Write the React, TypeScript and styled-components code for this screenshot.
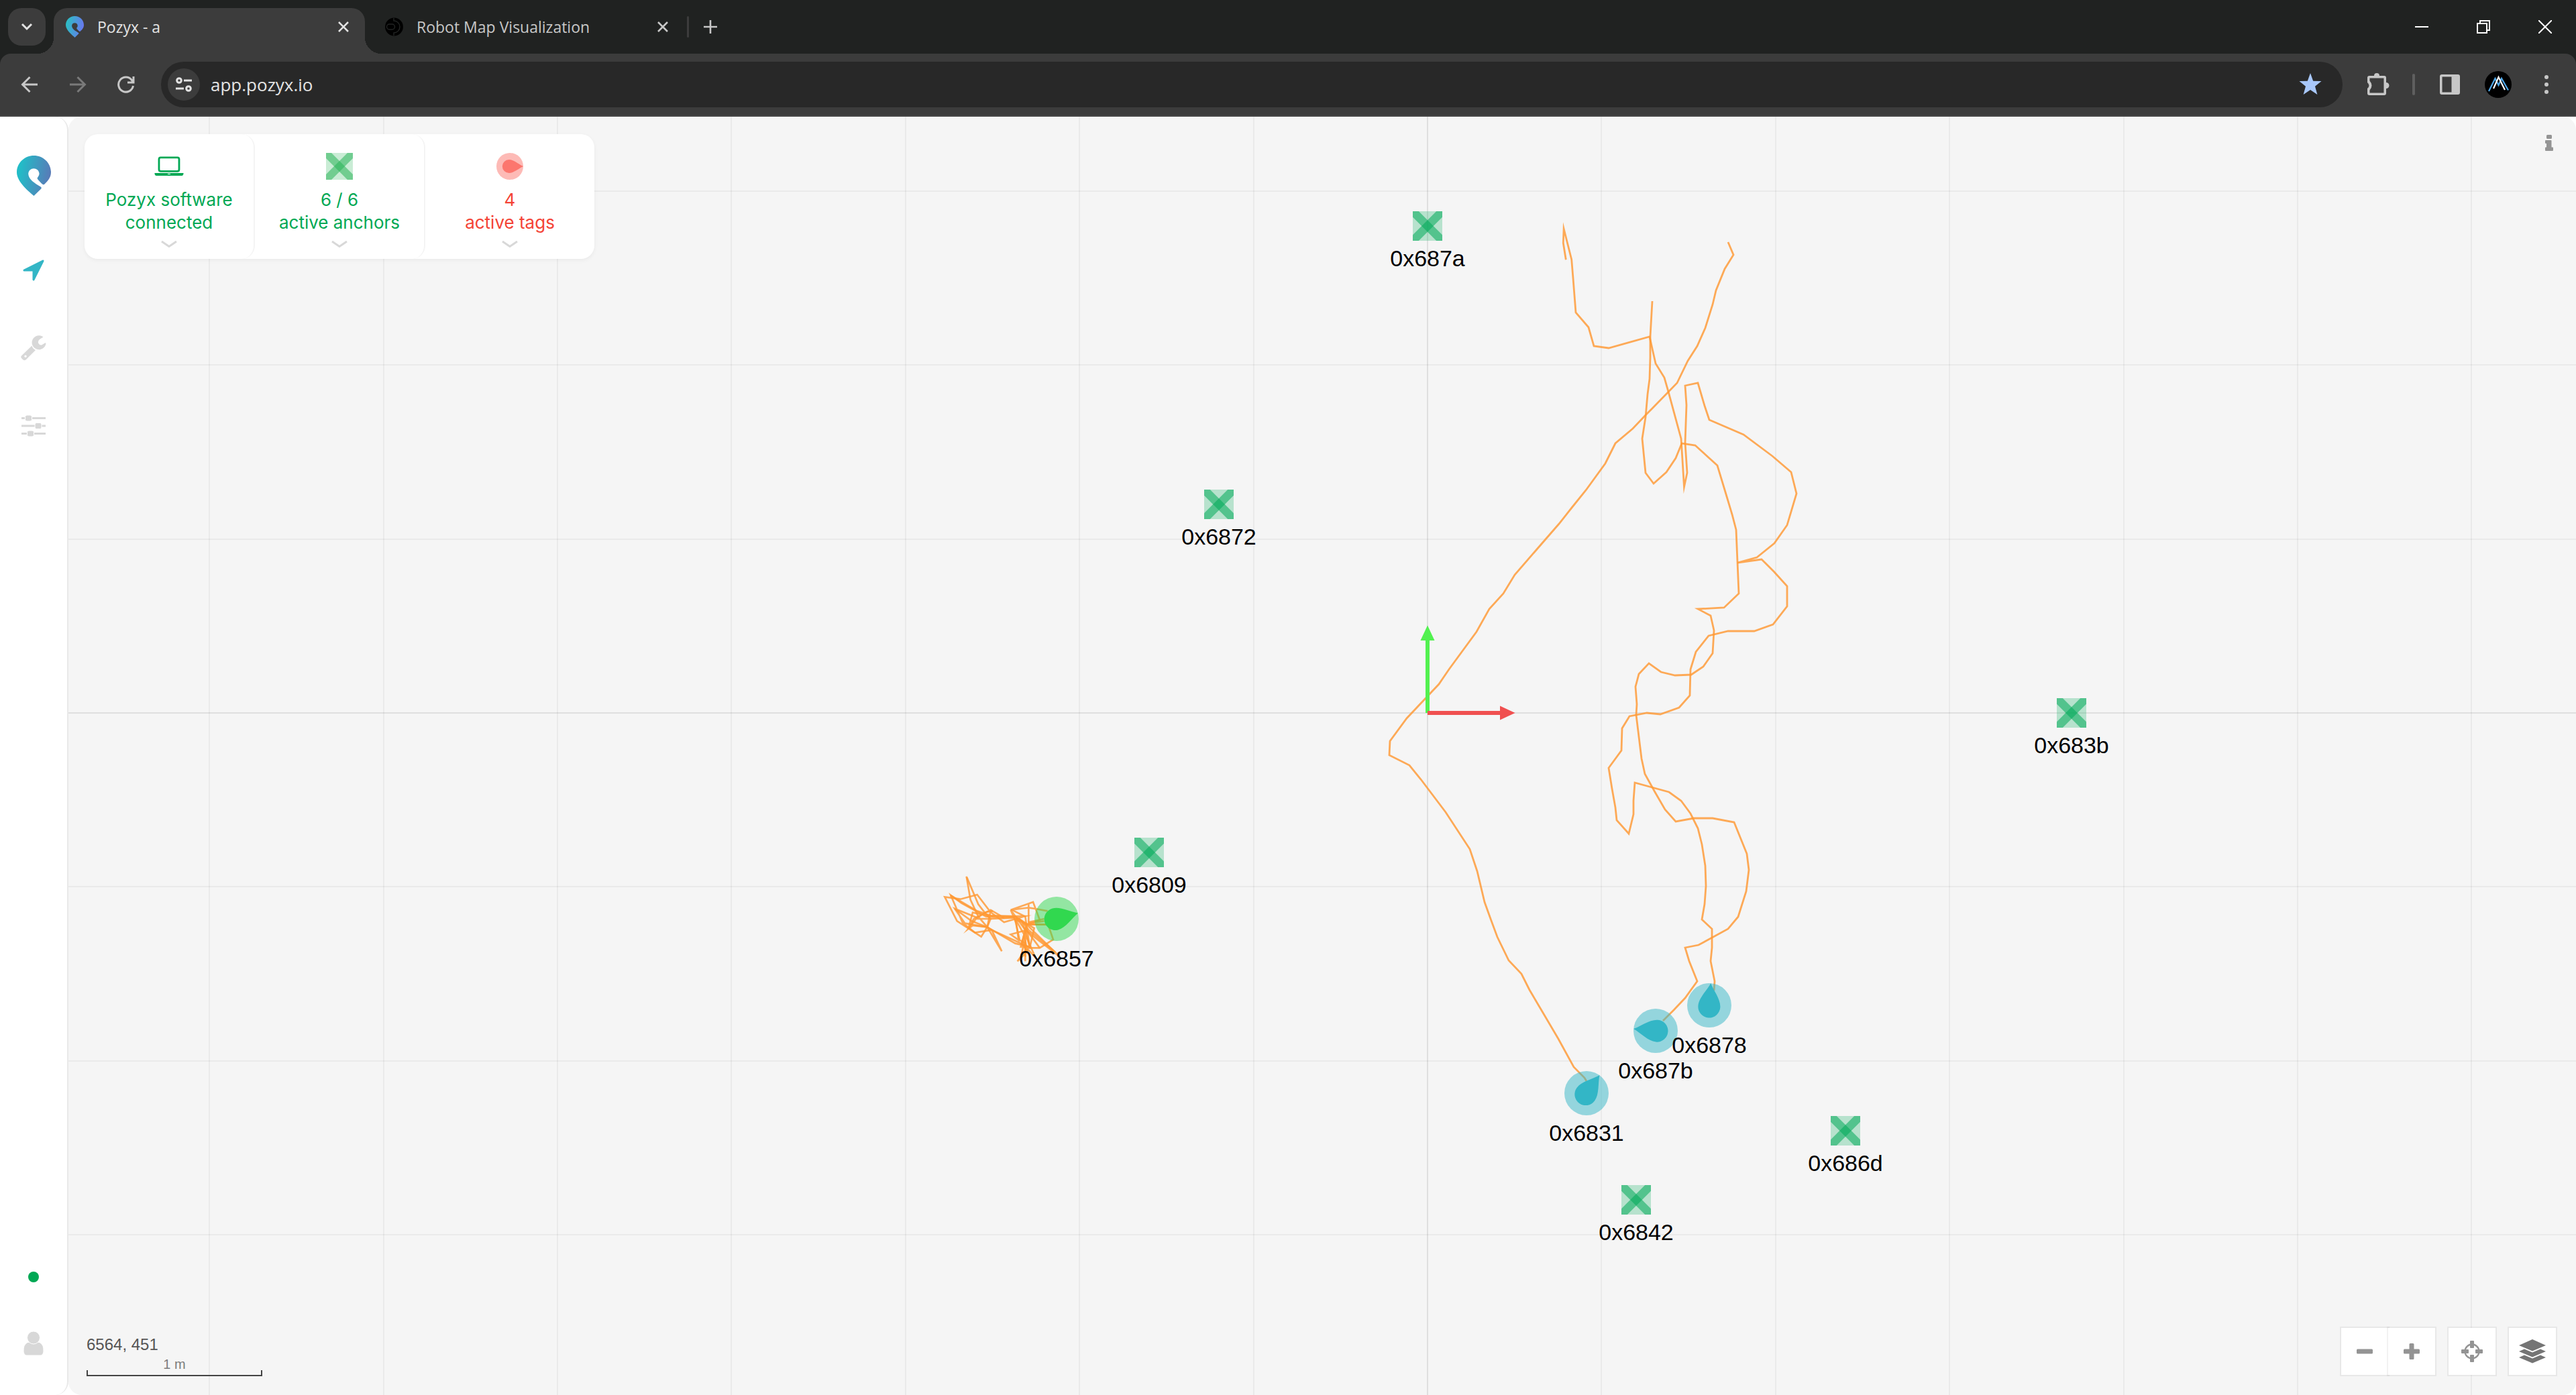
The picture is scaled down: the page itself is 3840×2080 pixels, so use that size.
import React from "react";
import styled, { createGlobalStyle, css } from "styled-components";

/* ---------- theme values ---------- */
const ui = `Inter, "Open Sans", sans-serif`;
const chromeFont = `"Open Sans", "Noto Sans", sans-serif`;
const mapFont = `"Liberation Sans", Arial, sans-serif`;
const green = "#00a854";
const teal = "#33b6c6";

const Global = createGlobalStyle`
  *, *::before, *::after { box-sizing: border-box; }
  html, body { margin: 0; background: #fff; }
  button, input { font: inherit; margin: 0; }
  svg { display: block; }
`;

const Page = styled.div`
  display: flex;
  flex-direction: column;
  min-height: 100vh;
  font-family: ${ui};
`;

const bare = css`
  appearance: none;
  border: 0;
  padding: 0;
  background: none;
  color: inherit;
  display: flex;
  align-items: center;
  justify-content: center;
  cursor: pointer;
`;

/* ---------- browser tabs ---------- */
const TabStrip = styled.header`
  display: flex;
  align-items: center;
  height: 80px;
  padding-left: 12px;
  background: #202221;
  color: #e3e3e3;
  font-family: ${chromeFont};
`;

const TabSearch = styled.button`
  ${bare}
  width: 56px;
  height: 56px;
  border-radius: 20px;
  background: #3c3c3c;
  margin-right: 12px;
`;

const Tab = styled.div<{ $active?: boolean }>`
  position: relative;
  display: flex;
  align-items: center;
  align-self: flex-end;
  width: ${(p) => (p.$active ? 464 : 480)}px;
  height: 68px;
  padding: ${(p) => (p.$active ? "0 18px 12px 18px" : "0 22px 12px 30px")};
  color: ${(p) => (p.$active ? "#e3e3e3" : "#c7c7c7")};
  ${(p) =>
    p.$active &&
    css`
      background: #3c3c3c;
      border-radius: 20px 20px 0 0;
      &::before,
      &::after {
        content: "";
        position: absolute;
        bottom: 0;
        width: 24px;
        height: 24px;
      }
      &::before {
        right: 100%;
        background: radial-gradient(circle at 0 0, transparent 24px, #3c3c3c 24px);
      }
      &::after {
        left: 100%;
        background: radial-gradient(circle at 100% 0, transparent 24px, #3c3c3c 24px);
      }
    `}
`;

const TabTitle = styled.button`
  ${bare}
  flex: 1;
  justify-content: flex-start;
  gap: 20px;
  font-size: 23px;
  line-height: 32px;
  white-space: nowrap;
`;

const SmallButton = styled.button`
  ${bare}
  width: 28px;
  height: 28px;
`;

const TabRule = styled.span`
  width: 3px;
  height: 32px;
  border-radius: 2px;
  background: #3c3c3c;
`;

const NewTab = styled.button`
  ${bare}
  width: 64px;
  height: 56px;
`;

const WindowButtons = styled.div`
  display: flex;
  margin-left: auto;
`;

const WindowButton = styled.button`
  ${bare}
  width: 92px;
  height: 80px;
`;

/* ---------- browser toolbar ---------- */
const ToolbarBack = styled.div`
  background: #202221;
`;

const Toolbar = styled.div`
  display: flex;
  align-items: center;
  height: 94px;
  padding: 0 8px;
  background: #3c3c3c;
  border-bottom: 2px solid #474747;
  border-radius: 16px 16px 0 0;
  color: #c7c7c7;
  font-family: ${chromeFont};
`;

const ToolButton = styled.button<{ $dim?: boolean }>`
  ${bare}
  width: 72px;
  height: 68px;
  color: ${(p) => (p.$dim ? "#7a7a7a" : "#c7c7c7")};
`;

const AddressBar = styled.form`
  display: flex;
  align-items: center;
  flex: 1;
  height: 68px;
  margin: 0 18px 0 16px;
  padding: 0 34px 0 10px;
  border-radius: 34px;
  background: #282828;
`;

const SiteInfo = styled.button`
  ${bare}
  width: 48px;
  height: 48px;
  border-radius: 50%;
  background: #3c3c3c;
  color: #e3e3e3;
`;

const AddressInput = styled.input`
  flex: 1;
  border: 0;
  outline: 0;
  padding: 0 0 0 16px;
  background: none;
  color: #e3e3e3;
  font-size: 26px;
  line-height: 36px;
`;

const ToolbarActions = styled.div`
  display: flex;
  align-items: center;
`;

const ToolRule = styled.span`
  width: 4px;
  height: 32px;
  margin: 0 16px 0 14px;
  border-radius: 2px;
  background: #5f5f5f;
`;

/* ---------- application frame ---------- */
const Workspace = styled.div`
  display: flex;
  flex: 1;
`;

const Sidebar = styled.nav`
  display: flex;
  flex-direction: column;
  align-items: center;
  width: 102px;
  padding: 58px 0 40px;
  border-right: 2px solid #e9e9e9;
  border-radius: 0 20px 20px 0;
  background: #fff;
`;

const LogoLink = styled.a`
  display: block;
  margin-bottom: 53px;
`;

const SideButton = styled.button<{ $active?: boolean }>`
  ${bare}
  width: 100px;
  height: 116px;
  color: ${(p) => (p.$active ? teal : "#d8d8d8")};
`;

const SideFoot = styled.div`
  display: flex;
  flex-direction: column;
  align-items: center;
  gap: 54px;
  margin-top: auto;
`;

const StatusDot = styled.span`
  width: 16px;
  height: 16px;
  border-radius: 50%;
  background: ${green};
`;

const UserButton = styled.button`
  ${bare}
  width: 74px;
  height: 74px;
  color: #d8d8d8;
`;

const MapPane = styled.main`
  position: relative;
  display: flex;
  flex-direction: column;
  justify-content: space-between;
  flex: 1;
  padding: 26px 28px 28px 24px;
  border-radius: 20px;
  background: #f5f5f5;
  overflow: hidden;
`;

const PaneRow = styled.div<{ $end?: boolean }>`
  position: relative;
  display: flex;
  justify-content: space-between;
  align-items: ${(p) => (p.$end ? "flex-end" : "flex-start")};
`;

const InfoButton = styled.button`
  ${bare}
  width: 24px;
  height: 26px;
  color: #949494;
`;

/* ---------- status card ---------- */
const StatusCard = styled.section`
  display: flex;
  border-radius: 20px;
  background: #fff;
  box-shadow: 0 2px 6px rgba(0, 0, 0, 0.05);
`;

const StatusCell = styled.button<{ $tone: string }>`
  ${bare}
  flex-direction: column;
  width: 254px;
  padding: 28px 0 17px;
  color: ${(p) => p.$tone};
  font-size: 26px;
  line-height: 34px;
  border-radius: 20px;
  border-right: 2px solid #f4f4f4;
  &:last-child {
    width: 252px;
    border-right: 0;
  }
`;

const StatusIcon = styled.span`
  display: flex;
  align-items: center;
  height: 40px;
  margin-bottom: 13px;
`;

const StatusText = styled.span`
  width: 200px;
  text-align: center;
`;

const ChevronMark = styled.svg`
  margin-top: 10px;
`;

/* ---------- map layer ---------- */
const World = styled.div`
  position: absolute;
  left: 2026px;
  top: 889px;
`;

const Drawing = styled.svg`
  position: absolute;
  left: 0;
  top: 0;
  overflow: visible;
`;

const Marker = styled.div.attrs<{ $x: number; $y: number }>((p) => ({
  style: { left: p.$x, top: p.$y },
}))<{ $x: number; $y: number; $tag?: boolean }>`
  position: absolute;
  display: flex;
  flex-direction: column;
  align-items: center;
  gap: 7px;
  width: 140px;
  margin: ${(p) => (p.$tag ? -33 : -22)}px 0 0 -70px;
  color: #000;
  font-family: ${mapFont};
  font-size: 34px;
  line-height: 38px;
`;

const Readout = styled.div`
  padding: 0 0 0 3px;
  font-family: ${mapFont};
  color: #555;
  font-size: 24px;
  line-height: 28px;
`;

const ScaleBar = styled.div`
  display: flex;
  flex-direction: column;
  width: 262px;
  height: 33px;
  color: #7c7c7c;
  font-size: 20px;
  line-height: 30px;
  text-align: center;
`;

const ScaleRule = styled.span`
  height: 10px;
  margin-top: -6px;
  border: 2px solid #444;
  border-top: 0;
`;

const MapControls = styled.div`
  display: flex;
  gap: 16px;
`;

const ControlButton = styled.button`
  ${bare}
  width: 74px;
  height: 74px;
  border: 2px solid rgba(0, 0, 0, 0.05);
  background: #fff padding-box;
  color: #949494;
`;

const ControlGroup = styled.div`
  display: flex;
  & > * + * {
    margin-left: -4px;
  }
`;

/* ---------- drawings ---------- */
const PIN =
  "M25.5 0C39.5 0 51 11 51 25C51 33 46 38 41.5 42.5Q40 44 38.5 42.8C36 41 33.5 38 31 35Q30 33.5 31.5 32C33 30 33.5 28.5 33.5 26.5A8.2 8.2 0 0 0 17.2 26.5C17.2 34 24 39 29 42.5L36 46.8Q37.5 48 36 49.8L25.5 60C20 55 0 40 0 25C0 11 11.5 0 25.5 0Z";

function Pin({ id, w, h, from, to }: { id: string; w: number; h: number; from: string; to: string }) {
  return (
    <svg width={w} height={h} viewBox="0 0 51 60" aria-hidden="true">
      <defs>
        <linearGradient id={id} x1="0.1" y1="0.3" x2="1" y2="0.5">
          <stop offset="0" stopColor={from} />
          <stop offset="1" stopColor={to} />
        </linearGradient>
      </defs>
      <path d={PIN} fill={`url(#${id})`} />
    </svg>
  );
}

function Cross() {
  return (
    <svg width="16" height="16" viewBox="0 0 16 16" stroke="currentColor" strokeWidth="2.6" aria-hidden="true">
      <path d="M1 1 15 15M15 1 1 15" />
    </svg>
  );
}

function Chevron() {
  return (
    <ChevronMark width="24" height="10" viewBox="0 0 24 10" fill="none" stroke="#d8d8d8" strokeWidth="3" aria-hidden="true">
      <path d="M1 1 12 8.500 23 1" />
    </ChevronMark>
  );
}

function AnchorIcon({ size, color }: { size: number; color: string }) {
  return (
    <svg width={size} height={size} viewBox="0 0 44 44" aria-hidden="true" overflow="hidden">
      <rect width="44" height="44" fill={color} opacity="0.25" />
      <path d="M-6 -6 50 50" stroke={color} strokeWidth="12.5" opacity="0.54" />
      <path d="M50 -6 -6 50" stroke={color} strokeWidth="12.5" opacity="0.54" />
    </svg>
  );
}

function TagIcon({ size, color, angle }: { size: number; color: string; angle: number }) {
  return (
    <svg width={size} height={size} viewBox="-33 -33 66 66" aria-hidden="true">
      <circle r="33" fill={color} opacity="0.5" />
      <path
        transform={`rotate(${angle})`}
        d="M33 0C22 -5 10 -16.5 -2 -16.5A16.5 16.5 0 0 0 -2 16.5C10 16.5 22 5 33 0Z"
        fill={color}
      />
    </svg>
  );
}

const METRE = 259.4;
const cells = Array.from({ length: 17 }, (_, i) => i - 8);

const anchors = [
  { id: "0x687a", x: 0, y: 2.8 },
  { id: "0x6872", x: -1.2, y: 1.2 },
  { id: "0x683b", x: 3.7, y: 0 },
  { id: "0x6809", x: -1.6, y: -0.8 },
  { id: "0x686d", x: 2.4, y: -2.4 },
  { id: "0x6842", x: 1.2, y: -2.8 },
];

const tags = [
  { id: "0x6857", x: -553, y: 307, angle: -15, color: "#31d84f" },
  { id: "0x6831", x: 237, y: 567, angle: -54, color: teal },
  { id: "0x687b", x: 340, y: 474, angle: 185, color: teal },
  { id: "0x6878", x: 420, y: 436, angle: -86, color: teal },
];

const trails = [
  "M2576 361L2584 380L2571 401L2558 433L2553 454L2542 489L2530 516L2516 538L2500 571L2462 610L2452 620L2434 639L2408 661L2393 691L2364 731L2343 757L2324 781L2258 857L2241 885L2220 908L2201 942L2160 998L2145 1020L2097 1071L2072 1105L2071 1126L2101 1141L2118 1162L2155 1211L2191 1266L2202 1299L2213 1345L2222 1370L2232 1397L2249 1432L2268 1452L2280 1476L2303 1515L2323 1549L2346 1591L2362 1607L2365 1612",
  "M2334.300 387.300L2330.300 362.300L2331.100 341L2342.700 387L2345 415L2349 466L2368 488L2376 516L2398 519L2459 502L2468 542L2481 563L2487 584L2506 654L2510.500 726L2515 705L2512 660L2514 604L2512 575L2531 571L2541 605L2548 626L2599 648L2642 680L2670 704L2678 736L2664 783L2645 810L2619 831L2590 839L2626 834L2645 853L2664 874L2664 904L2643 931L2615 941L2576 941L2547 948L2528 972L2520 998L2519 1037L2503 1055L2475 1065L2455 1063L2429 1068L2418 1086L2417 1119L2398 1145L2403 1176L2408 1204L2410 1223L2428 1243L2435 1214L2435 1194L2437 1167L2488 1181L2506 1194L2520 1213L2531 1235L2537 1259L2542 1291L2543 1321L2541 1348L2537 1371L2552 1385L2552 1413L2550 1433L2556 1463L2555 1477",
  "M2463 449L2460 502L2460 533L2459 565L2456 588L2453 622L2448 654L2453 705L2465 721L2484 704L2498 683L2507 661L2527 664L2560 694L2573 737L2582 767L2588 790L2590 838L2592 885L2570 906L2531 908L2550 918L2555 940L2553 974L2539 994L2521 1006L2497 1007L2476 1002L2458 989L2443 1005L2438 1024L2440 1050L2439 1066L2447 1131L2452 1154L2467 1181L2482 1207L2498 1225L2525 1220L2553 1220L2585 1226L2604 1273L2607 1297L2603 1329L2591 1367L2576 1385L2532 1409L2512 1413L2518 1433L2530 1463L2512 1488L2496 1505L2479 1522",
];

/* The stationary tag jitters, so its trail is a dense knot kept at three units per pixel. */
const knot = [
  "M545 415L490 405L460 400L380 410L480 375L510 455L485 465L460 470L460 385",
  "M545 475L445 475L405 440L350 445L290 410L215 450L190 495L210 422L290 438L445 438L350 465L290 420L230 342L155 362L85 352L140 460L248 530L275 487L290 415",
  "M300 415L270 420L230 445L130 405L175 470L275 487L295 500L220 512L165 468L112 345L160 380L270 440L350 445",
  "M110 345L230 415L290 435L400 440L485 492L465 580L510 580L570 543L548 478",
  "M182 260L200 365L235 440L275 487L210 480L190 495L225 450L290 450L400 445",
  "M184 265L235 385L270 430L290 450L275 487L340 595L295 500L430 562L465 578L445 500L380 410L405 470L415 545L380 520L450 500",
  "M130 405L205 460L275 487L400 560L465 575L445 440L385 410",
  "M445 640L445 500L425 575L465 575L440 600L410 640L460 590L490 622L445 520L425 630L450 500L510 580",
  "M425 455L445 500L600 620L445 470L400 455L420 545L445 560L445 620",
  "M445 500L480 515L580 600L460 500L430 460L400 450L440 520L455 600L430 560L450 480",
  "M460 465L530 450M460 470L530 460M465 475L540 475",
];

/* ---------- component ---------- */
export default function App() {
  return (
    <Page>
      <Global />
      <TabStrip>
        <TabSearch aria-label="Search tabs">
          <svg width="18" height="12" viewBox="0 0 18 12" fill="none" stroke="#e3e3e3" strokeWidth="3">
            <path d="M2 2 9 9 16 2" />
          </svg>
        </TabSearch>
        <Tab $active>
          <TabTitle>
            <Pin id="tabPin" w={27} h={32} from="#2fbac5" to="#6a76f0" />
            Pozyx - a
          </TabTitle>
          <SmallButton aria-label="Close tab">
            <Cross />
          </SmallButton>
        </Tab>
        <Tab>
          <TabTitle>
            <svg width="27" height="28" viewBox="0 0 27 28" aria-hidden="true">
              <circle cx="13.5" cy="14" r="13.400" fill="#000" />
              <g fill="none" stroke="#232524" strokeWidth="1.400">
                <rect x="2.500" y="10" width="12" height="8" rx="4" />
                <path d="M13 1V5C18 5 22 9 22 14S18 23 13 23V27" />
              </g>
            </svg>
            Robot Map Visualization
          </TabTitle>
          <SmallButton aria-label="Close tab">
            <Cross />
          </SmallButton>
        </Tab>
        <TabRule />
        <NewTab aria-label="New tab">
          <svg width="20" height="20" viewBox="0 0 20 20" stroke="#c7c7c7" strokeWidth="2.6">
            <path d="M10 0V20M0 10H20" />
          </svg>
        </NewTab>
        <WindowButtons>
          <WindowButton aria-label="Minimize">
            <svg width="20" height="20" viewBox="0 0 20 20" stroke="#fff" strokeWidth="2">
              <path d="M0 10H20" />
            </svg>
          </WindowButton>
          <WindowButton aria-label="Restore">
            <svg width="20" height="20" viewBox="0 0 20 20" fill="none" stroke="#fff" strokeWidth="2">
              <path d="M1 5H15V19H1ZM5 5V1H19V15H15" />
            </svg>
          </WindowButton>
          <WindowButton aria-label="Close window">
            <svg width="20" height="20" viewBox="0 0 20 20" stroke="#fff" strokeWidth="2">
              <path d="M0 0 20 20M20 0 0 20" />
            </svg>
          </WindowButton>
        </WindowButtons>
      </TabStrip>

      <ToolbarBack>
        <Toolbar>
          <ToolButton aria-label="Back">
            <svg width="26" height="26" viewBox="0 0 26 26" fill="none" stroke="currentColor" strokeWidth="3">
              <path d="M25 13H3M13.500 2 2.500 13 13.500 24" />
            </svg>
          </ToolButton>
          <ToolButton aria-label="Forward" $dim>
            <svg width="26" height="26" viewBox="0 0 26 26" fill="none" stroke="currentColor" strokeWidth="3">
              <path d="M1 13H23M12.500 2 23.500 13 12.500 24" />
            </svg>
          </ToolButton>
          <ToolButton aria-label="Reload">
            <svg width="26" height="26" viewBox="0 0 26 26" fill="none" stroke="currentColor" strokeWidth="3">
              <path d="M23.500 15A11 11 0 1 1 21.500 6.500L24 10M24 1V10H15" />
            </svg>
          </ToolButton>
          <AddressBar onSubmit={(e) => e.preventDefault()}>
            <SiteInfo type="button" aria-label="Site information">
              <svg width="24" height="24" viewBox="0 0 24 24" fill="none" stroke="currentColor" strokeWidth="3">
                <circle cx="5" cy="6" r="3.300" />
                <circle cx="19" cy="18" r="3.300" />
                <path d="M12 6H24M0 18H12" />
              </svg>
            </SiteInfo>
            <AddressInput aria-label="Address" defaultValue="app.pozyx.io" />
            <SmallButton type="button" aria-label="Edit bookmark">
              <svg width="34" height="32" viewBox="0 0 34 32" fill="#a8c7fa" overflow="visible">
                <path d="M17 -1 21.200 10.800 33.500 11 24 18.800 27.400 31 17 24 6.600 31 10 18.800 .5 11 12.800 10.800Z" />
              </svg>
            </SmallButton>
          </AddressBar>
          <ToolbarActions>
            <ToolButton aria-label="Extensions">
              <svg width="34" height="36" viewBox="0 0 34 36" fill="currentColor" overflow="visible">
                <path
                  d="M0 24V31Q0 34 3 34H25Q28 34 28 31V24A4.500 4.500 0 0 0 28 15V8Q28 5 25 5H18A4 4 0 0 0 10 5H3Q0 5 0 8V15Q5 19.500 0 24Z M3.500 8.500H24.500V30.500H3.500V26.500Q9.500 19.500 3.500 12.500Z"
                  fillRule="evenodd"
                />
              </svg>
            </ToolButton>
            <ToolRule />
            <ToolButton aria-label="Side panel">
              <svg width="30" height="30" viewBox="0 0 30 30" fill="currentColor" fillRule="evenodd">
                <path d="M3 0H27Q30 0 30 3V27Q30 30 27 30H3Q0 30 0 27V3Q0 0 3 0ZM3.500 3.500V26.500H17.500V3.500Z" />
              </svg>
            </ToolButton>
            <ToolButton aria-label="Profile">
              <svg width="40" height="40" viewBox="0 0 40 40" fill="none" strokeWidth="2.200">
                <circle cx="20" cy="20" r="20" fill="#000" />
                <path d="M6 30 15.500 11 20.500 21 25 11 35 28.500" stroke="#4fa9ea" />
                <path d="M13 26 20.500 9 30 28" stroke="#fff" />
              </svg>
            </ToolButton>
            <ToolButton aria-label="Menu">
              <svg width="6" height="28" viewBox="0 0 6 28" fill="currentColor">
                <circle cx="3" cy="3" r="3" />
                <circle cx="3" cy="14" r="3" />
                <circle cx="3" cy="25" r="3" />
              </svg>
            </ToolButton>
          </ToolbarActions>
        </Toolbar>
      </ToolbarBack>

      <Workspace>
        <Sidebar aria-label="Main">
          <LogoLink href="#" aria-label="Pozyx home">
            <Pin id="sidePin" w={51} h={60} from="#22bcc7" to="#5a79b7" />
          </LogoLink>
          <SideButton $active aria-label="Tracking">
            <svg width="32" height="32" viewBox="0 0 32 32" fill="currentColor" stroke="currentColor" strokeWidth="3" strokeLinejoin="round">
              <path d="M30 2 16 30V16H2Z" />
            </svg>
          </SideButton>
          <SideButton aria-label="Setup">
            <svg width="38" height="38" viewBox="0 0 38 38" fill="currentColor" fillRule="evenodd">
              <path d="M33.500 2.500A10.500 10.500 0 1 0 37.500 12Q37 11 36 11.500L31 14.500Q28 15 26 11.500Q25.500 8 28 6Z" />
              <path d="M16.500 15.500Q17.500 19.500 22 22L7.500 36.500Q5.500 38 3.500 36.500L1 34Q-.5 32 1 30.500ZM7 29.500A1.700 1.700 0 1 0 7 33A1.700 1.700 0 1 0 7 29.500Z" />
            </svg>
          </SideButton>
          <SideButton aria-label="Settings">
            <svg width="36" height="32" viewBox="0 0 36 32" fill="currentColor">
              <path d="M0 3H36V6H0ZM0 14.500H36V17.500H0ZM0 26H36V29H0Z" />
              <g stroke="#fff" strokeWidth="1">
                <rect x="5.500" y="0" width="10" height="9" rx="2.500" />
                <rect x="20" y="11.500" width="10" height="9" rx="2.500" />
                <rect x="8.500" y="23" width="10" height="9" rx="2.500" />
              </g>
            </svg>
          </SideButton>
          <SideFoot>
            <StatusDot role="img" aria-label="Online" />
            <UserButton aria-label="Account">
              <svg width="30" height="36" viewBox="0 0 30 36" fill="currentColor">
                <path d="M6 17H24Q30 20 29.500 30Q29 35.500 25 35.500H5Q1 35.500 .5 30Q0 20 6 17Z" />
                <circle cx="15" cy="9.500" r="9.500" stroke="#fff" strokeWidth="1" />
              </svg>
            </UserButton>
          </SideFoot>
        </Sidebar>

        <MapPane>
          <World>
            <Drawing width="1" height="1" aria-hidden="true">
              <g stroke="#000" strokeWidth="2" strokeOpacity="0.045">
                {cells.map((n) => (
                  <React.Fragment key={n}>
                    <path d={`M${Math.round(n * METRE)} -1000V1100`} />
                    <path d={`M-2100 ${Math.round(n * METRE)}H1900`} />
                  </React.Fragment>
                ))}
                <path d="M0 -1000V1100M-2100 0H1900" />
              </g>
              <g transform="translate(-2128 -1063)" fill="none" stroke="#ff9933" strokeOpacity="0.82">
                <g strokeWidth="2.800" strokeMiterlimit="12">
                  {trails.map((d) => (
                    <path key={d} d={d} />
                  ))}
                </g>
                <g transform="translate(1380 1220) scale(.33333)" strokeWidth="8" strokeMiterlimit="8">
                  {knot.map((d) => (
                    <path key={d} d={d} />
                  ))}
                </g>
              </g>
              <path d="M-3 0V-108H-10.500L0 -130.500L10.500 -108H3V0Z" fill="#52f150" />
              <path d="M0 -3H108V-10.500L130.500 0L108 10.500V3H0Z" fill="#f05050" />
            </Drawing>
            {anchors.map((a) => (
              <Marker key={a.id} $x={Math.round(a.x * METRE)} $y={Math.round(-a.y * METRE)}>
                <AnchorIcon size={44} color="#00aa58" />
                {a.id}
              </Marker>
            ))}
            {tags.map((t) => (
              <Marker key={t.id} $tag $x={t.x} $y={t.y}>
                <TagIcon size={66} color={t.color} angle={t.angle} />
                {t.id}
              </Marker>
            ))}
          </World>

          <PaneRow>
            <StatusCard aria-label="System status">
              <StatusCell $tone={green}>
                <StatusIcon>
                  <svg width="44" height="30" viewBox="0 0 44 30" fill="none" stroke="currentColor" strokeWidth="2.800">
                    <rect x="7" y="1.800" width="30" height="20.500" rx="2.500" />
                    <path d="M.5 25H43.500V26Q43 29 41 29H3Q1 29 .5 26Z" fill="currentColor" stroke="none" />
                    <path d="M20 26.500H24" stroke="#fff" strokeWidth="1" />
                  </svg>
                </StatusIcon>
                <StatusText>Pozyx software connected</StatusText>
                <Chevron />
              </StatusCell>
              <StatusCell $tone={green}>
                <StatusIcon>
                  <AnchorIcon size={40} color="#27b357" />
                </StatusIcon>
                <StatusText>
                  6 / 6<br />
                  active anchors
                </StatusText>
                <Chevron />
              </StatusCell>
              <StatusCell $tone="#f44336">
                <StatusIcon>
                  <TagIcon size={40} color="#fc766e" angle={0} />
                </StatusIcon>
                <StatusText>
                  4<br />
                  active tags
                </StatusText>
                <Chevron />
              </StatusCell>
            </StatusCard>
            <InfoButton aria-label="Information">
              <svg width="12" height="24" viewBox="0 0 12 24" fill="currentColor">
                <rect x="2" y="0" width="8" height="6" rx="1.500" />
                <path d="M1 8H8.500Q9.500 8 9.500 9V18.500H11Q12 18.500 12 19.500V23Q12 24 11 24H1Q0 24 0 23V19.500Q0 18.500 1 18.500H2V13H1Q0 13 0 12V9Q0 8 1 8Z" />
              </svg>
            </InfoButton>
          </PaneRow>

          <PaneRow $end>
            <Readout>
              6564, 451
              <ScaleBar>
                1 m
                <ScaleRule />
              </ScaleBar>
            </Readout>
            <MapControls>
              <ControlGroup>
                <ControlButton aria-label="Zoom out">
                  <svg width="24" height="24" viewBox="0 0 24 24" fill="currentColor">
                    <rect y="8.500" width="24" height="7" rx="1.500" />
                  </svg>
                </ControlButton>
                <ControlButton aria-label="Zoom in">
                  <svg width="24" height="24" viewBox="0 0 24 24" fill="currentColor">
                    <rect y="8.500" width="24" height="7" rx="1.500" />
                    <rect x="8.500" width="7" height="24" rx="1.500" />
                  </svg>
                </ControlButton>
              </ControlGroup>
              <ControlButton aria-label="Center map">
                <svg width="32" height="32" viewBox="0 0 32 32" fill="currentColor">
                  <circle cx="16" cy="16" r="10.500" fill="none" stroke="currentColor" strokeWidth="2.400" />
                  <rect x="13" y="0" width="6" height="11" rx="1" />
                  <rect x="13" y="21" width="6" height="11" rx="1" />
                  <rect x="0" y="13" width="11" height="6" rx="1" />
                  <rect x="21" y="13" width="11" height="6" rx="1" />
                </svg>
              </ControlButton>
              <ControlButton aria-label="Layers">
                <svg width="40" height="36" viewBox="0 0 40 36" fill="#757575">
                  <path d="M20 0 40 9 20 17.500 0 9Z" />
                  <path d="M0 18 8 14.500 20 19.500 32 14.500 40 18 20 26.500Z" />
                  <path d="M0 27 8 23.500 20 28.500 32 23.500 40 27 20 35.500Z" />
                </svg>
              </ControlButton>
            </MapControls>
          </PaneRow>
        </MapPane>
      </Workspace>
    </Page>
  );
}
